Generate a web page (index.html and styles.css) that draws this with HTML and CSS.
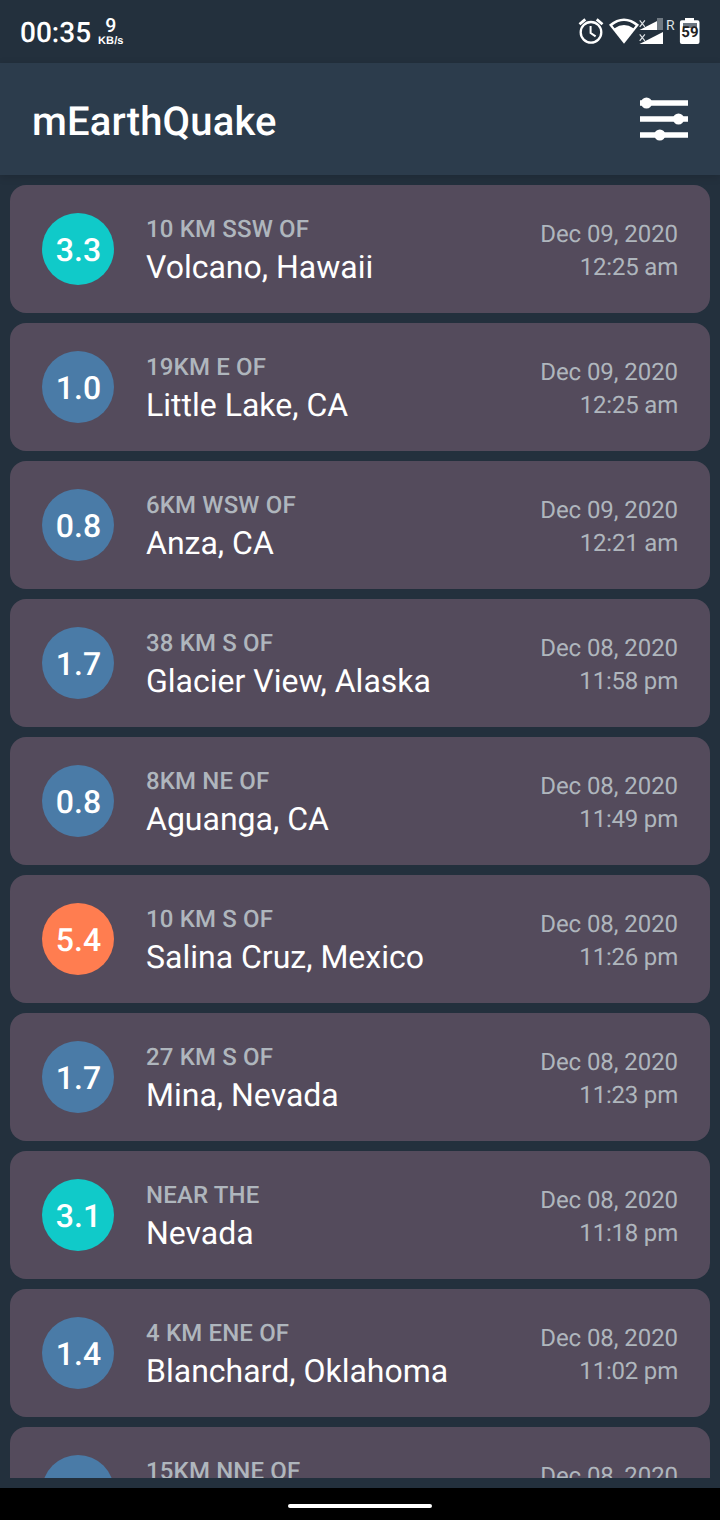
FILE: index.html
```html
<!DOCTYPE html>
<html lang="en">
<head>
<meta charset="utf-8">
<title>mEarthQuake</title>
<link rel="stylesheet" href="styles.css">
</head>
<body>
<div class="status">
  <span class="clock">00:35</span>
  <span class="speed"><span class="rate">9</span><span class="unit">KB/s</span></span>
  <svg class="status-icons" width="124" height="36" viewBox="576 14 124 36">
    <g fill="none" stroke="#fff" stroke-width="2.3">
      <circle cx="591" cy="32.3" r="10.3"/>
      <path d="M590.6 26v7l5 3.4" stroke-width="2"/>
      <path d="M579.5 24.3l5.8-4.9M596.7 19.4l5.8 4.9" stroke-width="2.8"/>
    </g>
    <path d="M609 24.8q15-12.8 30 0l-15 18.9z" fill="#fff"/>
    <path d="M612.4 25.4q11.6-8.6 23.2 0l-2.2 2.9q-9.4-6.6-18.8 0z" fill="#23303d"/>
    <path d="M639.5 30L663 18v12z" fill="#fff"/>
    <path d="M657 18h6v12h-6z" fill="#6f7982"/>
    <path d="M639.5 44L663 32v12z" fill="#fff"/>
    <path d="M639.5 18h6v9h-6zM639.5 33h6v8h-6z" fill="#23303d"/>
    <path d="M639.7 20.3l5.2 6.600M644.9 20.3l-5.2 6.600M639.7 34.3l5.2 6.600M644.9 34.3l-5.2 6.600" stroke="#dfe3e6" stroke-width="1.2"/>
    <text x="666" y="30" class="roaming">R</text>
    <path d="M685 18h9v2.2h3.5q2 0 2 2V42q0 2-2 2h-15.600q-2 0-2-2V22.200q0-2 2-2h3.100z" fill="#fff"/>
    <path d="M683 23h14v5h-14z" fill="#6b7580"/>
    <text x="689.900" y="37.200" class="charge">59</text>
  </svg>
</div>
<header class="appbar">
  <h1 class="title">mEarthQuake</h1>
  <svg width="48" height="44" viewBox="640 97 48 44" fill="#fff">
    <path d="M640 100.300h48v5.400h-48zM640 116.300h48v5.400h-48zM640 132.300h48v5.400h-48z"/>
    <circle cx="646.500" cy="103" r="5.500"/><circle cx="678.500" cy="119" r="5.500"/><circle cx="659.800" cy="135" r="5.500"/>
  </svg>
</header>
<main class="list">
  <article class="card"><div class="mag strong">3.3</div><div class="where"><div class="offset">10 KM SSW OF</div><div class="place">Volcano, Hawaii</div></div><div class="when"><div>Dec 09, 2020</div><div class="time">12:25 am</div></div></article>
  <article class="card"><div class="mag">1.0</div><div class="where"><div class="offset">19KM E OF</div><div class="place">Little Lake, CA</div></div><div class="when"><div>Dec 09, 2020</div><div class="time">12:25 am</div></div></article>
  <article class="card"><div class="mag">0.8</div><div class="where"><div class="offset">6KM WSW OF</div><div class="place">Anza, CA</div></div><div class="when"><div>Dec 09, 2020</div><div class="time">12:21 am</div></div></article>
  <article class="card"><div class="mag">1.7</div><div class="where"><div class="offset">38 KM S OF</div><div class="place">Glacier View, Alaska</div></div><div class="when"><div>Dec 08, 2020</div><div class="time">11:58 pm</div></div></article>
  <article class="card"><div class="mag">0.8</div><div class="where"><div class="offset">8KM NE OF</div><div class="place">Aguanga, CA</div></div><div class="when"><div>Dec 08, 2020</div><div class="time">11:49 pm</div></div></article>
  <article class="card"><div class="mag severe">5.4</div><div class="where"><div class="offset">10 KM S OF</div><div class="place">Salina Cruz, Mexico</div></div><div class="when"><div>Dec 08, 2020</div><div class="time">11:26 pm</div></div></article>
  <article class="card"><div class="mag">1.7</div><div class="where"><div class="offset">27 KM S OF</div><div class="place">Mina, Nevada</div></div><div class="when"><div>Dec 08, 2020</div><div class="time">11:23 pm</div></div></article>
  <article class="card"><div class="mag strong">3.1</div><div class="where"><div class="offset">NEAR THE</div><div class="place">Nevada</div></div><div class="when"><div>Dec 08, 2020</div><div class="time">11:18 pm</div></div></article>
  <article class="card"><div class="mag">1.4</div><div class="where"><div class="offset">4 KM ENE OF</div><div class="place">Blanchard, Oklahoma</div></div><div class="when"><div>Dec 08, 2020</div><div class="time">11:02 pm</div></div></article>
  <article class="card"><div class="mag"></div><div class="where"><div class="offset">15KM NNE OF</div></div><div class="when"><div>Dec 08, 2020</div></div></article>
</main>
<footer class="navbar"><div class="handle"></div></footer>
</body>
</html>
```
FILE: styles.css
```css
* { box-sizing: border-box; }
body {
  margin: 0;
  width: 720px;
  height: 1520px;
  display: flex;
  flex-direction: column;
  overflow: hidden;
  background: #23303d;
  color: #fff;
  font-family: Roboto, sans-serif;
  text-rendering: geometricPrecision;
}
.status {
  height: 63px;
  flex: none;
  display: flex;
  padding: 14px 20px 0;
}
.clock { font-size: 28px; font-weight: 500; line-height: 37px; }
.speed {
  display: flex;
  flex-direction: column;
  align-items: center;
  margin-left: 7px;
  padding-top: 3px;
}
.rate { font-size: 19.5px; font-weight: 500; line-height: 18px; }
.unit { margin-top: 1px; font: 700 11px/11px "Liberation Sans", sans-serif; letter-spacing: 0.1px; }
.status-icons { margin-left: auto; }
.roaming { font: 400 14px Roboto, sans-serif; fill: #dfe3e6; }
.charge { font: 700 15px Roboto, sans-serif; fill: #222; text-anchor: middle; }
.appbar {
  height: 112px;
  flex: none;
  display: flex;
  align-items: center;
  justify-content: space-between;
  padding: 0 32px;
  background: #2c3c4c;
  box-shadow: 0 2px 8px rgba(0, 0, 0, 0.15);
}
.title { margin: 6px 0 0; font-size: 40px; line-height: 48px; font-weight: 500; letter-spacing: 0.15px; }
.list {
  height: 1293px;
  flex: none;
  margin: 10px 10px;
  display: flex;
  flex-direction: column;
  gap: 10px;
  overflow: hidden;
}
.card {
  height: 128px;
  flex: none;
  display: flex;
  align-items: flex-start;
  padding: 28px 32px;
  border-radius: 16px;
  background: #544b5c;
}
.mag {
  width: 72px;
  height: 72px;
  flex: none;
  padding-left: 1px;
  border-radius: 50%;
  background: #4a7ba7;
  font-size: 32px;
  font-weight: 500;
  line-height: 74px;
  text-align: center;
}
.strong { background: #10cac9; }
.severe { background: #ff7d50; }
.where { margin-left: 32px; padding-top: 2px; }
.offset { color: #afb6bd; font-size: 24px; font-weight: 500; line-height: 28px; letter-spacing: 0.15px; }
.place { margin-top: 5px; font-size: 32px; line-height: 38px; }
.when {
  margin-left: auto;
  padding-top: 5px;
  color: #afb6bd;
  font-size: 24px;
  line-height: 33px;
  letter-spacing: -0.07px;
  text-align: right;
}
.time { letter-spacing: -0.2px; }
.navbar {
  height: 32px;
  flex: none;
  display: flex;
  justify-content: center;
  padding-top: 16px;
  background: #000;
}
.handle { width: 144px; height: 4px; border-radius: 2px; background: #fff; }
```
